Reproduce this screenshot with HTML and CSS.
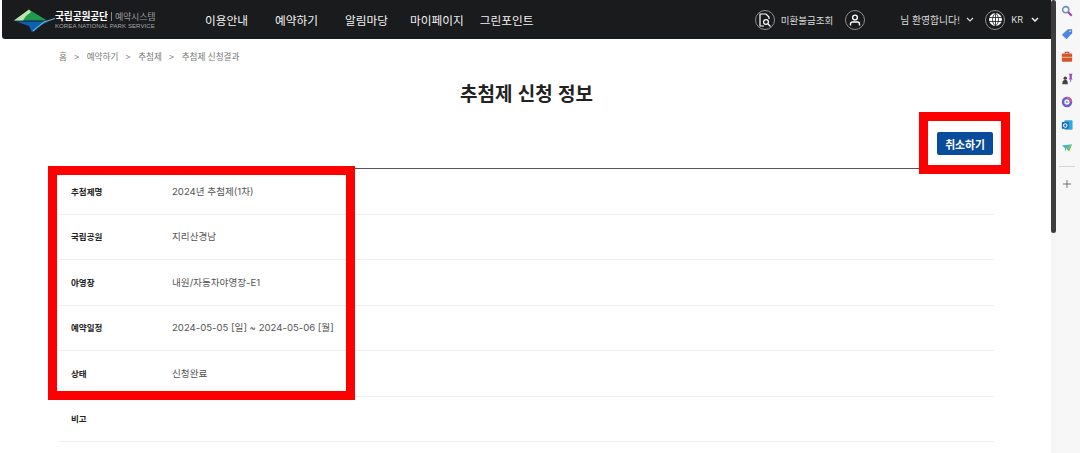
FILE: index.html
```html
<!DOCTYPE html>
<html lang="ko">
<head>
    <meta charset="UTF-8">
    <title>추첨제 신청 정보</title>
    <link rel="stylesheet" href="styles.css">
</head>
<body>
<div class="browser">
    <div class="page">
        <div class="header">
            <div class="logo">
                <svg class="logo-mark" width="42" height="26" viewBox="0 0 42 26">
                    <path d="M0 13.5 L15 2.5 L33 13.5 Z" fill="#1f9a4e"/>
                    <path d="M0 13.5 L15 2.5 L17 5 L12 9 L9 13.5 Z" fill="#bfe3ae"/>
                    <path d="M2 14.5 L35 14.5 L25 19 L18 25.5 L15 19 Z" fill="#0f5fb4"/>
                    <path d="M41 11.5 L30 15 L19 24" fill="none" stroke="#5cb4dc" stroke-width="1.2"/>
                </svg>
                <div class="logo-text">
                    <div class="logo-top"><b>국립공원공단</b><i></i><span>예약시스템</span></div>
                    <div class="logo-en">KOREA NATIONAL PARK SERVICE</div>
                </div>
            </div>
            <div class="nav">
                <span>이용안내</span>
                <span>예약하기</span>
                <span>알림마당</span>
                <span class="nav-my">마이페이지</span>
                <span class="nav-green">그린포인트</span>
            </div>
            <div class="util">
                <span class="circle">
                    <svg width="14" height="14" viewBox="0 0 14 14" fill="none" stroke="#fff" stroke-width="1.2">
                        <path d="M6 13H2V1h6l3 3v2"/>
                        <circle cx="8" cy="9" r="2.4"/>
                        <path d="M10 11l2.5 2.5"/>
                    </svg>
                </span>
                <span class="util-text">미환불금조회</span>
                <span class="circle user">
                    <svg width="12" height="12" viewBox="0 0 12 12" fill="none" stroke="#fff" stroke-width="1.4">
                        <circle cx="6" cy="3.5" r="2.4"/>
                        <path d="M1.5 11.5V10a2 2 0 0 1 2-2h5a2 2 0 0 1 2 2v1.5"/>
                    </svg>
                </span>
                <span class="util-text welcome">님 환영합니다!</span>
                <svg class="chev" width="8" height="5" viewBox="0 0 8 5"><path d="M1 1l3 3 3-3" fill="none" stroke="#ddd" stroke-width="1.2"/></svg>
                <span class="circle lang">
                    <svg width="13" height="13" viewBox="0 0 13 13" fill="#fff">
                        <circle cx="6.5" cy="6.5" r="6.5"/>
                        <path d="M0 4.5h13M0 8.5h13M6.5 0v13M6.5 0c-4 3-4 10 0 13M6.5 0c4 3 4 10 0 13" fill="none" stroke="#1a1b1d" stroke-width=".8"/>
                    </svg>
                </span>
                <span class="util-text kr">KR</span>
                <svg class="chev chev-kr" width="8" height="5" viewBox="0 0 8 5"><path d="M1 1l3 3 3-3" fill="none" stroke="#eee" stroke-width="1.5"/></svg>
            </div>
        </div>

        <div class="breadcrumb">
            <span>홈</span><em>&gt;</em><span>예약하기</span><em>&gt;</em><span>추첨제</span><em>&gt;</em><span>추첨제 신청결과</span>
        </div>

        <div class="content">
            <h1>추첨제 신청 정보</h1>
            <div class="actions">
                <button class="btn">취소하기</button>
            </div>
            <div class="info">
                <div class="row"><div class="label">추첨제명</div><div class="value">2024년 추첨제(1차)</div></div>
                <div class="row"><div class="label">국립공원</div><div class="value">지리산경남</div></div>
                <div class="row"><div class="label">야영장</div><div class="value">내원/자동차야영장-E1</div></div>
                <div class="row"><div class="label">예약일정</div><div class="value">2024-05-05 [일] ~ 2024-05-06 [월]</div></div>
                <div class="row"><div class="label">상태</div><div class="value">신청완료</div></div>
                <div class="row"><div class="label">비고</div><div class="value"></div></div>
            </div>
        </div>

        <div class="mark mark-table"></div>
        <div class="mark mark-btn"></div>
    </div>

    <div class="scrollbar"><div class="thumb"></div></div>

    <div class="sidebar">
        <svg width="12" height="12" viewBox="0 0 14 14" fill="none">
            <circle cx="5.5" cy="5.5" r="3.6" stroke="#6f8fc0" stroke-width="1.8"/>
            <path d="M8.5 8.5l4 4" stroke="#a63fb0" stroke-width="2.4"/>
        </svg>
        <svg width="12" height="12" viewBox="0 0 14 14">
            <path d="M1 8L8 1.5h5V6l-6.5 7z" fill="#4f86e4"/>
            <circle cx="10.5" cy="3.8" r="1" fill="#cfe0fa"/>
        </svg>
        <svg width="12" height="12" viewBox="0 0 14 14">
            <path d="M5 3V1.5h4V3" fill="none" stroke="#a8431f" stroke-width="1.2"/>
            <rect x="1" y="3" width="12" height="9.5" rx="1.2" fill="#d4552a"/>
            <rect x="1" y="6.8" width="12" height="1" fill="#f5c9a8"/>
        </svg>
        <svg width="12" height="12" viewBox="0 0 14 14">
            <circle cx="5" cy="6" r="2" fill="#444"/>
            <path d="M1.5 13c0-3.5 1.5-5 3.5-5s3 1.5 3 5z" fill="#444"/>
            <path d="M9 1h4.5L12.6 2.5V6l1 1.5H9L10 6V2.5z" fill="#9a45c8"/>
            <rect x="10.8" y="7.5" width="1" height="3" fill="#9a45c8"/>
        </svg>
        <svg width="12" height="12" viewBox="0 0 14 14" fill="none">
            <circle cx="7" cy="7" r="4.6" stroke="#6a5bd0" stroke-width="3"/>
            <path d="M7 2.4A4.6 4.6 0 0 1 11.6 7" stroke="#d05a9a" stroke-width="3"/>
            <path d="M6 5.5L9 7 6 8.5z" fill="#3f9fe0"/>
        </svg>
        <svg width="12" height="12" viewBox="0 0 14 14">
            <rect x="4" y="1.5" width="9.5" height="11" rx="1" fill="#39a5e0"/>
            <rect x="1" y="3.5" width="8" height="8" rx="1" fill="#0f6cbd"/>
            <circle cx="5" cy="7.5" r="2" fill="none" stroke="#fff" stroke-width="1.2"/>
        </svg>
        <svg width="12" height="12" viewBox="0 0 14 14">
            <path d="M1 4L13 2.5 6 8 5 11.5 4.5 7z" fill="#46b4c8"/>
            <path d="M13 2.5L9.5 11 6 8z" fill="#6fbf5a"/>
        </svg>
        <div class="side-line"></div>
        <svg class="side-plus" width="8" height="8" viewBox="0 0 9 9"><path d="M4.5 0v9M0 4.5h9" stroke="#666" stroke-width="1"/></svg>
    </div>
</div>
</body>
</html>
```
FILE: styles.css
```css
* {
    margin: 0;
    padding: 0;
    box-sizing: border-box;
}

body {
    font-family: "Noto Sans CJK KR", "Noto Sans", sans-serif;
    background: #fff;
    color: #222;
    overflow: hidden;
}

.browser {
    display: flex;
    width: 1080px;
    height: 453px;
    overflow: hidden;
}

.page {
    position: relative;
    flex: 1;
    min-width: 0;
    padding-left: 2px;
}

.header {
    display: flex;
    align-items: center;
    height: 39px;
    padding-left: 12px;
    background: #1a1b1d;
    border-radius: 0 0 0 3px;
    color: #fff;
}

.logo {
    display: flex;
    align-items: center;
    width: 191px;
}

.logo-mark {
    flex: none;
    margin-right: -1px;
}

.logo-text {
    margin-top: 2px;
    line-height: 1;
}

.logo-top {
    display: flex;
    align-items: center;
    font-size: 9px;
    letter-spacing: -0.2px;
    color: #9a9c9f;
}

.logo-top b {
    color: #fff;
    font-weight: 700;
    font-size: 9.8px;
}

.logo-top i {
    width: 1px;
    height: 9px;
    margin: 0 3px;
    background: #888;
}

.logo-en {
    margin-top: 2px;
    font-family: "Liberation Sans", sans-serif;
    font-size: 6px;
    letter-spacing: 0.1px;
    color: #a5a7aa;
    white-space: nowrap;
}

.nav {
    display: flex;
    gap: 27px;
    font-size: 11.7px;
    color: #f2f2f2;
}

.nav .nav-my {
    margin-left: -5px;
}

.nav .nav-green {
    margin-left: -11px;
}

.util {
    display: flex;
    align-items: center;
    margin-left: auto;
    padding-right: 12px;
}

.circle {
    display: flex;
    align-items: center;
    justify-content: center;
    width: 20px;
    height: 20px;
    border: 1px solid #8d8e90;
    border-radius: 50%;
}

.util-text {
    font-size: 9.5px;
    color: #dcdcdc;
}

.circle + .util-text {
    margin-left: 6px;
}

.user {
    margin-left: 12px;
}

.util .welcome {
    margin-left: 35px;
    font-size: 9.8px;
}

.chev {
    margin-left: 6px;
}

.chev-kr {
    margin-left: 8px;
}

.lang {
    margin-left: 11px;
}

.util .kr {
    margin-left: 6px;
    font-family: "Inter", sans-serif;
    font-size: 9px;
}

.breadcrumb {
    display: flex;
    align-items: center;
    height: 34px;
    padding-left: 57px;
    font-size: 8.6px;
    color: #777;
}

.breadcrumb em {
    margin: 0 7.5px;
    font-style: normal;
}

.content {
    padding: 0 57px 0 57px;
}

h1 {
    margin-top: 5px;
    height: 30px;
    font-size: 19px;
    line-height: 30px;
    font-weight: 700;
    text-align: center;
    color: #222;
}

.actions {
    display: flex;
    justify-content: flex-end;
    margin-top: 24px;
    margin-bottom: 13px;
    padding-right: 1px;
}

.btn {
    width: 56px;
    height: 23px;
    border: 0;
    border-radius: 2px;
    background: #0a4c9c;
    color: #fff;
    font-family: inherit;
    font-size: 10.8px;
    font-weight: 700;
}

.info {
    border-top: 1px solid #555;
}

.row {
    display: flex;
    align-items: center;
    height: 45.5px;
    padding-bottom: 1px;
    border-bottom: 1px solid #f0f0f0;
    font-size: 9.5px;
}

.label {
    width: 113px;
    padding-left: 12px;
    font-size: 8.5px;
    font-weight: 700;
    color: #222;
}

.value {
    font-family: "Inter", "Noto Sans CJK KR", sans-serif;
    font-size: 9.6px;
    color: #555;
}

.mark {
    position: absolute;
    border: 9px solid #f00;
}

.mark-table {
    left: 48px;
    top: 166px;
    width: 307px;
    height: 234px;
}

.mark-btn {
    left: 919px;
    top: 112px;
    width: 91px;
    height: 62px;
}

.scrollbar {
    flex: none;
    width: 5px;
    background: #f5f5f5;
}

.thumb {
    height: 233px;
    background: #3d3d3d;
    border-radius: 3px;
}

.sidebar {
    flex: none;
    display: flex;
    flex-direction: column;
    align-items: center;
    gap: 10.8px;
    width: 24px;
    padding: 5px 2px 0 0;
    background: #f7f7f7;
}

.side-line {
    width: 16px;
    height: 1px;
    margin-top: 1px;
    background: #d5d5d5;
}

.side-plus {
    margin-top: 3px;
}
```
